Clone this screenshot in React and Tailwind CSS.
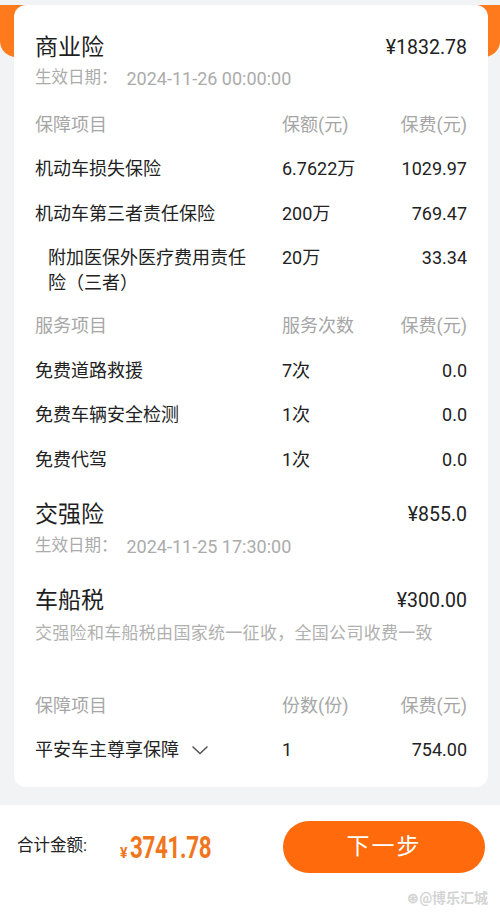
import React from "react";

const commercial = [
  { name: "机动车损失保险", amount: "6.7622万", fee: "1029.97" },
  { name: "机动车第三者责任保险", amount: "200万", fee: "769.47" },
];

const services = [
  { name: "免费道路救援", times: "7次", fee: "0.0" },
  { name: "免费车辆安全检测", times: "1次", fee: "0.0" },
  { name: "免费代驾", times: "1次", fee: "0.0" },
];

function HeadRow({ a, b, c }) {
  return (
    <div className="grid grid-cols-[247px_1fr_auto] h-[44.5px] items-center text-[18px] text-[#a6a6a6]">
      <span>{a}</span>
      <span>{b}</span>
      <span className="text-right">{c}</span>
    </div>
  );
}

function Row({ a, b, c }) {
  return (
    <div className="grid grid-cols-[247px_1fr_auto] h-[44.5px] items-center text-[18px] text-[#222]">
      <span>{a}</span>
      <span>{b}</span>
      <span className="text-right">{c}</span>
    </div>
  );
}

function DateLine({ value, className }) {
  return (
    <div className={"h-[24px] flex items-center text-[#ababab] " + className}>
      <span className="text-[16.5px]">生效日期：</span>
      <span className="text-[18px] ml-[9px]">{value}</span>
    </div>
  );
}

function Chevron() {
  return (
    <svg width="18" height="12" viewBox="0 0 18 12" className="ml-[12px]">
      <path d="M2 3 L9 9.5 L16 3" fill="none" stroke="#555" strokeWidth="1.6" strokeLinecap="round" strokeLinejoin="round" />
    </svg>
  );
}

export default function App() {
  return (
    <div
      className="w-[500px] h-[919px] overflow-hidden bg-[#f2f3f5] flex flex-col"
      style={{ fontFamily: 'Roboto, "Noto Sans CJK SC", sans-serif' }}
    >
      <div className="pt-[5px]">
        <div className="h-[52px] bg-[#ff7a1c] rounded-b-[16px]" />
      </div>

      <div className="-mt-[52px] ml-[14px] mr-[12px] bg-white rounded-[12px] px-[21px] pt-[28px] pb-[15px]">
        {/* 商业险 */}
        <div className="flex justify-between items-center h-[30px]">
          <span className="text-[23px] text-[#1e1e1e]">商业险</span>
          <span className="text-[19.5px] text-[#222]">¥1832.78</span>
        </div>
        <DateLine value="2024-11-26 00:00:00" className="mt-[3px]" />

        <div className="mt-[12px]">
          <HeadRow a="保障项目" b="保额(元)" c="保费(元)" />
          {commercial.map((r) => (
            <Row key={r.name} a={r.name} b={r.amount} c={r.fee} />
          ))}
          <div className="grid grid-cols-[247px_1fr_auto] pt-[9px] pb-[9px] leading-[25px] text-[18px] text-[#222]">
            <span className="pl-[13px] pr-[32px]">附加医保外医疗费用责任险（三者）</span>
            <span>20万</span>
            <span className="text-right">33.34</span>
          </div>
          <HeadRow a="服务项目" b="服务次数" c="保费(元)" />
          {services.map((r) => (
            <Row key={r.name} a={r.name} b={r.times} c={r.fee} />
          ))}
        </div>

        {/* 交强险 */}
        <div className="mt-[18.5px] flex justify-between items-center h-[30px]">
          <span className="text-[23px] text-[#1e1e1e]">交强险</span>
          <span className="text-[19.5px] text-[#222]">¥855.0</span>
        </div>
        <DateLine value="2024-11-25 17:30:00" className="mt-[4px]" />

        {/* 车船税 */}
        <div className="mt-[28px] flex justify-between items-center h-[30px]">
          <span className="text-[23px] text-[#1e1e1e]">车船税</span>
          <span className="text-[19.5px] text-[#222]">¥300.00</span>
        </div>
        <div className="mt-[6px] h-[24px] flex items-center whitespace-nowrap text-[17px] tracking-[0.3px] text-[#b0b0b0]">
          交强险和车船税由国家统一征收，全国公司收费一致
        </div>

        <div className="mt-[36.75px]">
          <HeadRow a="保障项目" b="份数(份)" c="保费(元)" />
          <div className="grid grid-cols-[247px_1fr_auto] h-[44.5px] items-center text-[18px] text-[#222]">
            <span className="flex items-center">
              平安车主尊享保障
              <Chevron />
            </span>
            <span>1</span>
            <span className="text-right">754.00</span>
          </div>
        </div>
      </div>

      <div className="mt-[18px] flex-1 bg-white flex flex-col">
        <div className="flex items-center pt-[16px] pl-[17px] pr-[15px]">
          <span className="text-[16.5px] text-[#222] w-[103px]">合计金额:</span>
          <span className="flex items-baseline text-[#f0761d] font-bold">
            <span className="text-[14px] mr-[2px]">¥</span>
            <span className="w-[84px] inline-block">
              <span className="inline-block text-[32px] scale-x-[0.7] origin-left tracking-[-0.5px]">3741.78</span>
            </span>
          </span>
          <button className="ml-auto w-[202px] h-[52px] rounded-full bg-[#ff6a0c] text-white text-[23px] tracking-[2px]">
            下一步
          </button>
        </div>
        <div className="mt-auto mb-[10px] pr-[12px] text-right text-[14px] font-bold text-[#d4d4d4]">
          ⊛@博乐汇城
        </div>
      </div>
    </div>
  );
}
